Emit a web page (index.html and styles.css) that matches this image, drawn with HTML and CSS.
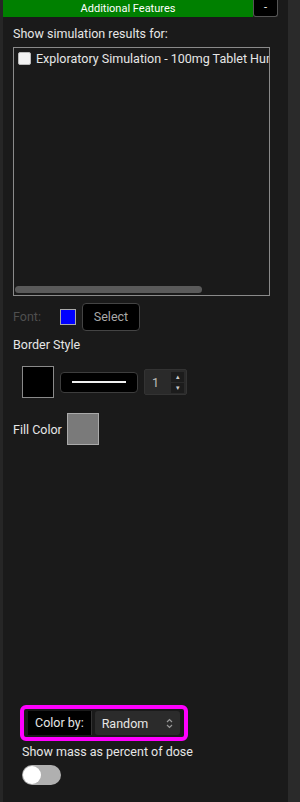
FILE: index.html
```html
<!DOCTYPE html>
<html lang="en">
<head>
    <meta charset="UTF-8">
    <meta name="viewport" content="width=device-width, initial-scale=1.0">
    <title>Additional Features</title>
    <link rel="stylesheet" href="styles.css">
</head>
<body>
    <div class="edge-left"></div>
    <div class="panel">
        <div class="panel-header">
            <div class="header-title">Additional Features</div>
            <button class="collapse-btn">-</button>
        </div>

        <div class="section">
            <p class="label">Show simulation results for:</p>
            <div class="sim-list">
                <label class="sim-item">
                    <span class="checkbox"></span>
                    <span class="sim-name">Exploratory Simulation - 100mg Tablet Human</span>
                </label>
                <div class="scrollbar"><div class="scroll-thumb"></div></div>
            </div>

            <div class="font-row">
                <span class="muted">Font:</span>
                <span class="swatch-blue"></span>
                <button class="select-btn">Select</button>
            </div>

            <p class="label heading">Border Style</p>
            <div class="border-row">
                <span class="swatch-black"></span>
                <div class="line-style"><span class="line"></span></div>
                <div class="spinner">
                    <span class="spin-value">1</span>
                    <div class="spin-arrows">
                        <span class="spin-btn">&#9652;</span>
                        <span class="spin-btn">&#9662;</span>
                    </div>
                </div>
            </div>

            <div class="fill-row">
                <span class="label">Fill Color</span>
                <span class="swatch-gray"></span>
            </div>
        </div>

        <div class="bottom">
            <div class="color-by">
                <span class="color-by-label">Color by:</span>
                <div class="color-by-select">
                    <span>Random</span>
                    <svg width="7" height="11" viewBox="0 0 7 11"><path d="M1 4 L3.5 1.5 L6 4" fill="none" stroke="#999" stroke-width="1.2"/><path d="M1 7 L3.5 9.5 L6 7" fill="none" stroke="#999" stroke-width="1.2"/></svg>
                </div>
            </div>
            <p class="label mass-label">Show mass as percent of dose</p>
            <div class="toggle"><span class="knob"></span></div>
        </div>
    </div>
    <div class="edge-right"></div>
</body>
</html>
```

FILE: styles.css
```css
body {
    font-family: Roboto, 'Liberation Sans', Arial, sans-serif;
    background: #1a1a1a;
    color: #e6e6e6;
    margin: 0;
    padding: 0;
    display: flex;
    height: 802px;
    overflow: hidden;
}

.edge-left {
    width: 3px;
    background: #262626;
}

.edge-right {
    width: 12px;
    background: #2a2a2a;
}

.panel {
    width: 285px;
    background: #1a1a1a;
    display: flex;
    flex-direction: column;
}

.panel-header {
    display: flex;
    height: 17px;
}

.header-title {
    width: 250px;
    background: #008000;
    color: #ffffff;
    font-size: 11px;
    text-align: center;
    line-height: 17px;
}

.collapse-btn {
    width: 25px;
    height: 17px;
    margin: 0;
    padding: 0;
    background: #000000;
    color: #ffffff;
    border: 1px solid #555;
    border-top: none;
    border-radius: 0 0 3px 3px;
    font-size: 11px;
    line-height: 14px;
    font-family: inherit;
}

.section {
    padding: 0 10px;
}

.label {
    margin: 0;
    font-size: 12.5px;
    color: #e6e6e6;
}

.section > .label:first-child {
    margin-top: 8px;
    line-height: 17px;
}

.sim-list {
    margin-top: 5px;
    width: 255px;
    height: 247px;
    border: 1px solid #8a8a8a;
    position: relative;
    overflow: hidden;
}

.sim-item {
    display: flex;
    align-items: center;
    gap: 5px;
    padding: 3px 0 0 4px;
    white-space: nowrap;
    font-size: 12.5px;
}

.checkbox {
    width: 11px;
    height: 11px;
    background: #f2f2f2;
    border: 1px solid #bbb;
    border-radius: 2px;
    flex: none;
}

.scrollbar {
    position: absolute;
    left: 1px;
    right: 1px;
    bottom: 2px;
    height: 7px;
}

.scroll-thumb {
    width: 187px;
    height: 7px;
    background: #5a5a5a;
    border-radius: 4px;
}

.font-row {
    display: flex;
    align-items: center;
    margin-top: 7px;
    height: 27px;
}

.muted {
    color: #4f4f4f;
    font-size: 12.5px;
    width: 47px;
}

.swatch-blue {
    width: 14px;
    height: 14px;
    background: #0000ff;
    border: 1px solid #aaa;
}

.select-btn {
    margin-left: 6px;
    width: 58px;
    height: 28px;
    background: #000000;
    color: #a8a8a8;
    border: 1px solid #444;
    border-radius: 4px;
    font-family: inherit;
    font-size: 12.5px;
    padding: 0;
}

.heading {
    margin-top: 6px;
    line-height: 17px;
}

.border-row {
    display: flex;
    align-items: center;
    margin-top: 13px;
    padding-left: 9px;
    gap: 6px;
}

.swatch-black {
    width: 30px;
    height: 30px;
    background: #000000;
    border: 1px solid #8a8a8a;
}

.line-style {
    width: 76px;
    height: 19px;
    background: #000000;
    border: 1px solid #3d3d3d;
    border-radius: 4px;
    display: flex;
    align-items: center;
    justify-content: center;
}

.line {
    width: 54px;
    height: 2px;
    background: #f0f0f0;
}

.spinner {
    width: 41px;
    height: 24px;
    background: #2a2a2a;
    border: 1px solid #333;
    border-radius: 2px;
    display: flex;
    align-items: center;
    justify-content: space-between;
}

.spin-value {
    padding-left: 7px;
    font-size: 12.5px;
    color: #bbb;
}

.spin-arrows {
    display: flex;
    flex-direction: column;
    gap: 1px;
    margin-right: 2px;
}

.spin-btn {
    width: 13px;
    height: 10px;
    background: #1c1c1c;
    color: #ccc;
    font-size: 7px;
    line-height: 10px;
    text-align: center;
}

.fill-row {
    display: flex;
    align-items: center;
    margin-top: 15px;
    gap: 5px;
}

.swatch-gray {
    width: 30px;
    height: 30px;
    background: #7a7a7a;
    border: 1px solid #aaa;
}

.bottom {
    margin-top: auto;
    padding: 0 0 17px 19px;
}

.color-by {
    display: inline-flex;
    align-items: center;
    border: 4px solid #ff00ff;
    border-radius: 6px;
    padding: 2px 4px;
    gap: 3px;
    margin-left: -2px;
}

.color-by-label {
    background: #000000;
    color: #e6e6e6;
    font-size: 12.5px;
    padding: 0 7px;
    line-height: 24px;
    border-right: 1px solid #333;
}

.color-by-select {
    width: 85px;
    height: 24px;
    background: #2b2b2b;
    border-radius: 3px;
    display: flex;
    align-items: center;
    justify-content: space-between;
    padding: 0 7px 0 7px;
    box-sizing: border-box;
    font-size: 12.5px;
    color: #e6e6e6;
}

.mass-label {
    margin-top: 2px;
    line-height: 17px;
}

.toggle {
    margin-top: 5px;
    width: 39px;
    height: 20px;
    border-radius: 10px;
    background: #b0b0b0;
    position: relative;
}

.knob {
    position: absolute;
    left: 1px;
    top: 1px;
    width: 18px;
    height: 18px;
    border-radius: 50%;
    background: #ffffff;
}
```
